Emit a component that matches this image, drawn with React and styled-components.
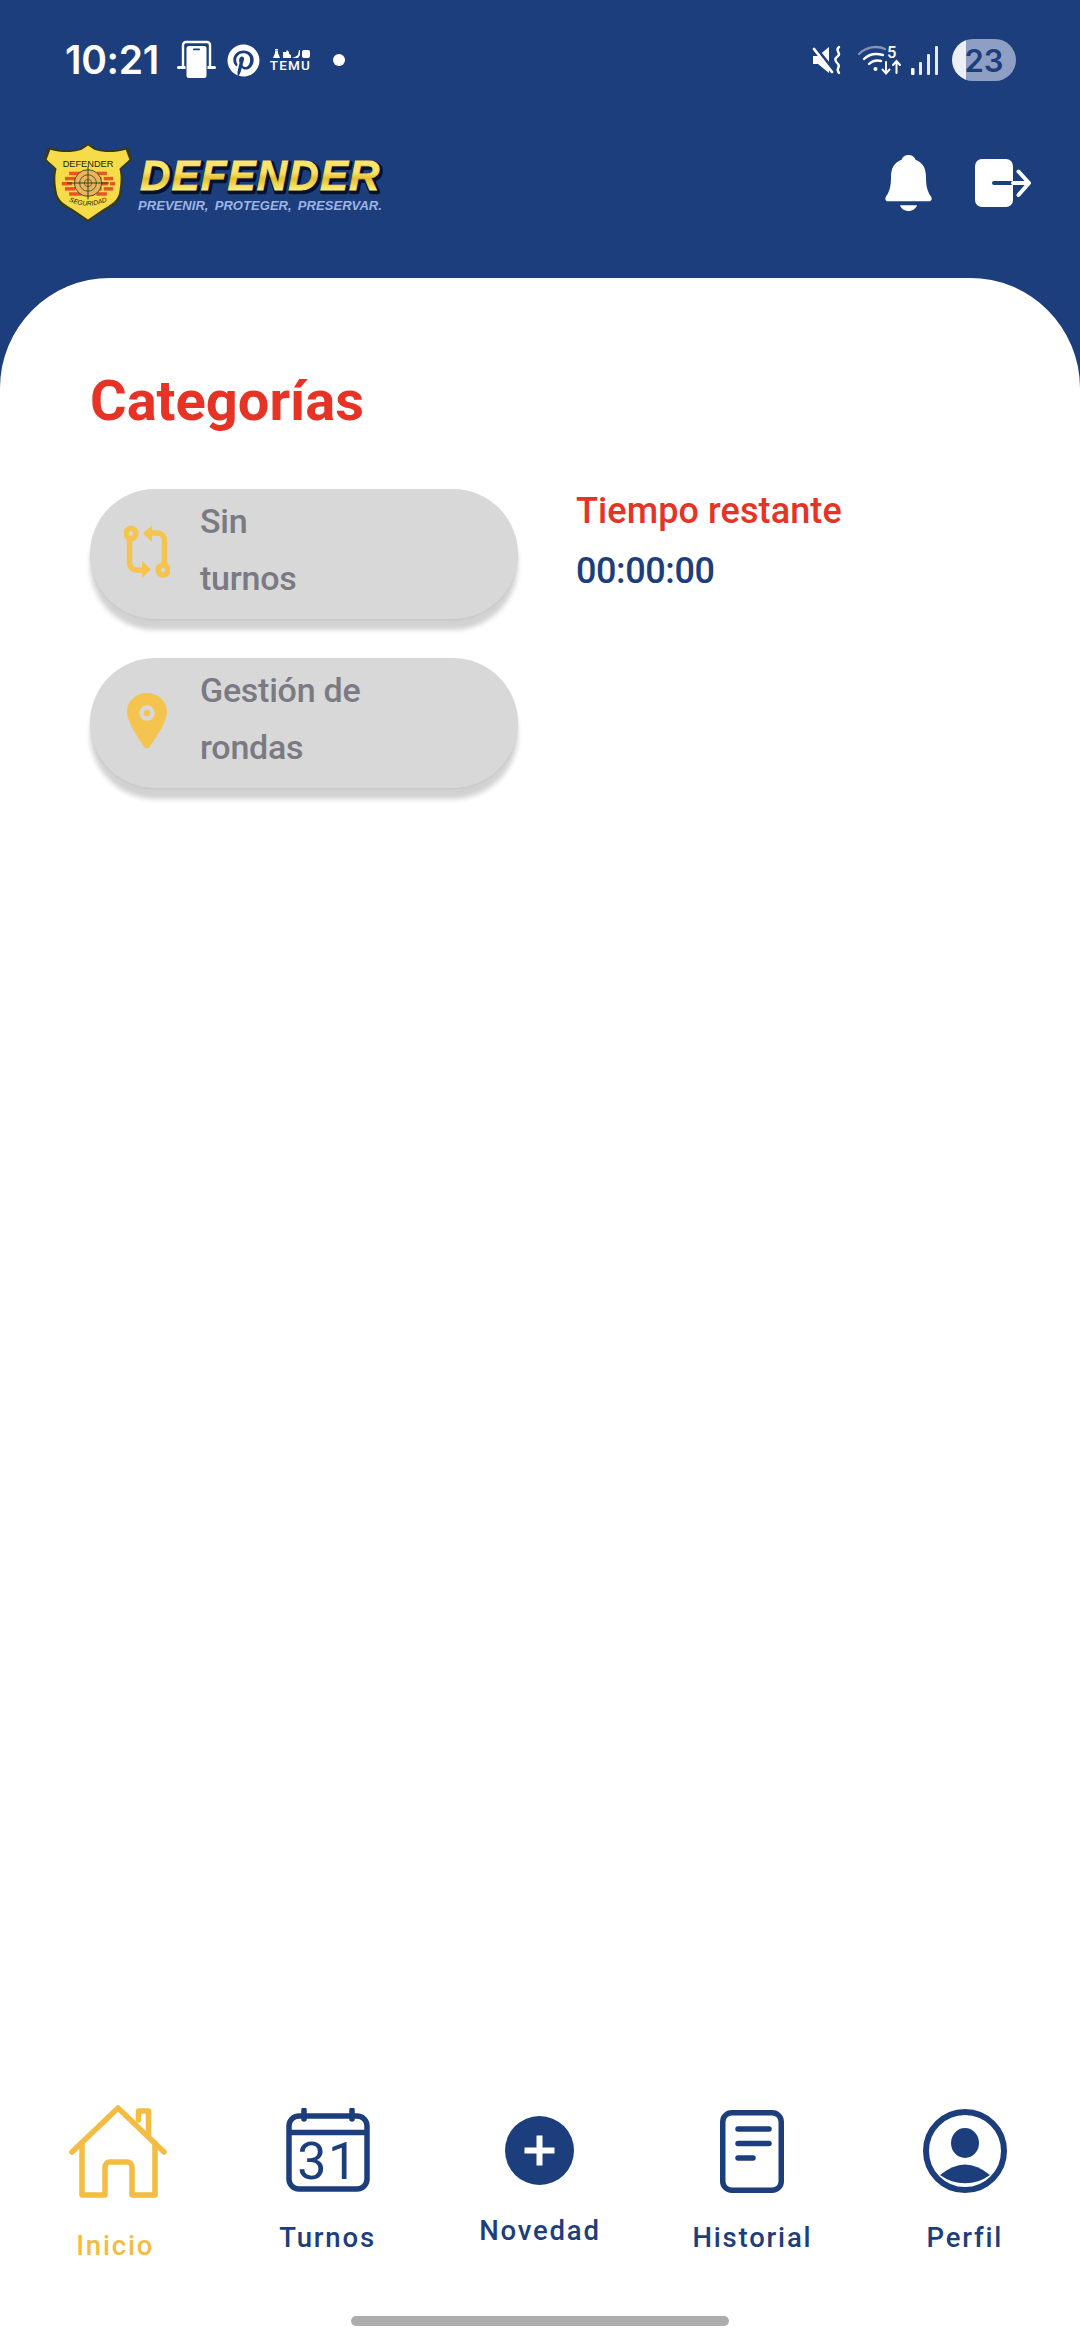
import React from "react";
import styled, { createGlobalStyle } from "styled-components";
import { FaPinterest } from "react-icons/fa";

const BLUE = "#1c3e7c";
const YELLOW = "#f2bd42";
const RED = "#e63326";

const Global = createGlobalStyle`
  html, body { margin: 0; padding: 0; background: #fff; }
  body { font-family: Roboto, "Noto Sans", sans-serif; }
  * { box-sizing: border-box; }
`;

const Screen = styled.div`
  width: 1080px;
  height: 2340px;
  background: ${BLUE};
  display: flex;
  flex-direction: column;
  overflow: hidden;
`;
const Header = styled.header`
  height: 278px;
  flex: none;
  color: #fff;
`;
const StatusBar = styled.div`
  height: 120px;
  padding: 0 64px 0 65px;
  display: flex;
  align-items: center;
  justify-content: space-between;
`;
const StatusGroup = styled.div`
  display: flex;
  align-items: center;
`;
const Clock = styled.span`
  font-family: Inter, Roboto, sans-serif;
  font-size: 39px;
  font-weight: 600;
  line-height: 44px;
  width: 93px;
  margin-right: 19px;
  white-space: nowrap;
  letter-spacing: -0.3px;
`;
const StatusIcon = styled.svg`
  display: block;
  flex: none;
  overflow: visible;
  margin-right: ${(p) => p.$mr || 0}px;
`;
const PinWrap = styled.span`
  display: flex;
  font-size: 33px;
  margin-right: 11px;
`;
const TemuBadge = styled.span`
  width: 39px;
  margin-right: 23px;
  display: flex;
  flex-direction: column;
  align-items: center;
`;
const TemuText = styled.span`
  font-family: Roboto, sans-serif;
  font-size: 13.5px;
  font-weight: 500;
  line-height: 11px;
  letter-spacing: 1.2px;
  white-space: nowrap;
`;
const Dot = styled.span`
  width: 12px;
  height: 12px;
  border-radius: 50%;
  background: #fff;
`;
const Battery = styled.div`
  width: 64px;
  height: 42px;
  border-radius: 21px;
  overflow: hidden;
  display: flex;
  align-items: center;
  justify-content: center;
  background: linear-gradient(90deg, #eceff6 14px, #8e9fc3 14px);
  color: ${BLUE};
  font-family: Inter, Roboto, sans-serif;
  font-size: 31px;
  font-weight: 600;
`;
const AppBar = styled.div`
  height: 126px;
  padding: 0 49px 0 44px;
  display: flex;
  align-items: center;
  justify-content: space-between;
`;
const Logo = styled.div`
  display: flex;
  align-items: center;
  gap: 5px;
`;
const Actions = styled.div`
  display: flex;
  align-items: center;
  gap: 43px;
`;
const Panel = styled.main`
  flex: 1;
  background: #fff;
  border-radius: 110px 110px 0 0;
  display: flex;
  flex-direction: column;
`;
const Content = styled.section`
  padding: 91px 0 0 90px;
`;
const Title = styled.h1`
  margin: 0 0 56px 0;
  font-size: 56px;
  font-weight: 700;
  line-height: 64px;
  color: ${RED};
`;
const Columns = styled.div`
  display: flex;
  align-items: flex-start;
  gap: 58px;
`;
const Pills = styled.div`
  width: 428px;
  display: flex;
  flex-direction: column;
  gap: 39px;
`;
const Pill = styled.div`
  height: 130px;
  border-radius: 65px;
  background: #d8d8d8;
  box-shadow: 0 11px 5px rgba(0, 0, 0, 0.18), 0 1px 2px rgba(0, 0, 0, 0.05);
  display: flex;
  align-items: center;
`;
const PillIcon = styled.div`
  width: 110px;
  flex: none;
  display: flex;
  justify-content: center;
  padding: 0 0 6px 3px;
`;
const PillLabel = styled.span`
  font-size: 34px;
  line-height: 57px;
  font-weight: 500;
  letter-spacing: -0.25px;
  color: #7a7a84;
  padding-bottom: 8px;
`;
const Timer = styled.div`
  padding-top: 0;
`;
const TimerLabel = styled.div`
  font-size: 36px;
  font-weight: 500;
  line-height: 44px;
  color: ${RED};
  letter-spacing: 0.1px;
`;
const TimerValue = styled.div`
  margin-top: 16px;
  font-size: 36px;
  font-weight: 500;
  line-height: 44px;
  color: ${BLUE};
  letter-spacing: -0.4px;
`;
const Nav = styled.nav`
  margin-top: auto;
  padding: 0 9px;
  display: grid;
  grid-template-columns: repeat(5, 1fr);
  height: 174px;
`;
const NavItem = styled.div`
  display: flex;
  flex-direction: column;
  align-items: center;
  padding-top: ${(p) => p.$top}px;
`;
const NavLabel = styled.span`
  margin-top: ${(p) => p.$gap}px;
  font-size: 27.5px;
  font-weight: 500;
  line-height: 32px;
  letter-spacing: 1.8px;
  color: ${(p) => (p.$active ? YELLOW : BLUE)};
  white-space: nowrap;
`;
const NavSvg = styled.svg`
  display: block;
  flex: none;
  margin-left: ${(p) => p.$ml || 0}px;
`;
const HomeBarRow = styled.div`
  height: 61px;
  flex: none;
  display: flex;
  justify-content: center;
  padding-top: 37px;
`;
const HomeBar = styled.div`
  width: 378px;
  height: 10px;
  border-radius: 5px;
  background: #adadad;
`;

const DeviceIcon = () => (
  <StatusIcon $mr={11} width="39" height="36" viewBox="0 0 39 36" fill="none">
    <path d="M6 25V3a3 3 0 0 1 3-3h21a3 3 0 0 1 3 3v22" stroke="#fff" strokeWidth="2.4" />
    <rect x="0" y="24" width="39" height="3" rx="1.5" fill="#fff" />
    <rect x="8.500" y="3" width="22" height="33" rx="3" fill={BLUE} />
    <rect x="9.500" y="4" width="20" height="32" rx="2.5" fill="#fff" />
    <rect x="16" y="6.500" width="7" height="1.800" rx="0.9" fill={BLUE} />
  </StatusIcon>
);

const MuteIcon = () => (
  <StatusIcon $mr={16} width="29" height="28" viewBox="0 0 29 28" fill="none">
    <path d="M0 10h5l11-9v26L5 18H0z" fill="#fff" />
    <path d="M1 1l20 25" stroke={BLUE} strokeWidth="5" />
    <path d="M1 3l18 23" stroke="#fff" strokeWidth="2.8" strokeLinecap="round" />
    <path d="M26 1c-5 4 3 6-1 9s-3 5 0 8-3 5 1 9" stroke="#fff" strokeWidth="2.4" strokeLinecap="round" />
  </StatusIcon>
);

const WifiIcon = () => (
  <StatusIcon $mr={9} width="44" height="30" viewBox="0 0 44 30" fill="none">
    <path d="M1 9c7-7 18-9 26-5" stroke="#fff" strokeOpacity="0.45" strokeWidth="2.4" strokeLinecap="round" />
    <path d="M6 14c5-5 12-6 19-4" stroke="#fff" strokeWidth="2.4" strokeLinecap="round" />
    <path d="M11 19c3-3 8-4 12-3" stroke="#fff" strokeWidth="2.4" strokeLinecap="round" />
    <circle cx="17.500" cy="24" r="2" fill="#fff" />
    <text x="29" y="13" fill="#fff" fontFamily="Roboto, sans-serif" fontSize="16.500" fontWeight="500">5</text>
    <path d="M28 17v11M24.500 24.500l3.500 4 3.500-4" stroke="#fff" strokeWidth="2" strokeLinecap="round" />
    <path d="M38.500 28V16M35 20l3.500-4 3.500 4" stroke="#fff" strokeWidth="2" strokeLinecap="round" />
  </StatusIcon>
);

const SignalIcon = () => (
  <StatusIcon $mr={14} width="27" height="29" viewBox="0 0 27 29">
    <rect x="0" y="22" width="3.500" height="7" rx="1" fill="#fff" />
    <rect x="8" y="16" width="3" height="13" rx="1" fill="#fff" opacity="0.9" />
    <rect x="16" y="8" width="3" height="21" rx="1" fill="#fff" opacity="0.9" />
    <rect x="24" y="0" width="3" height="29" rx="1" fill="#fff" opacity="0.9" />
  </StatusIcon>
);

const Shield = () => (
  <svg width="88" height="80" viewBox="0 0 84 78" preserveAspectRatio="none" style={{ display: "block", flex: "none" }}>
    <path d="M42 0l7 5c8 3 21 3 31-1l1 2 3 10c-4 4-8 7-10 9 2 8 1 16 0 23-1 10-8 14-16 18L42 77 26 66C18 62 11 58 10 48c-1-7-2-15 0-23-2-2-6-5-10-9l3-10 1-2c10 4 23 4 31 1z" fill="#3a3a14" />
    <path d="M42 2.500l6 4c9 3 20 3 30 0l3.500 9.500c-3 3.500-7 6-9.500 9 2 8 1 15 0 22-1 9-8 13-15 17L42 74.500 27 64C20 60 13 56 12 47c-1-7-2-14 0-22-2.500-3-6.500-5.500-9.500-9L6 6.500c10 3 21 3 30 0z" fill="#f6dc48" />
    <text x="42" y="23" textAnchor="middle" fontFamily="Liberation Sans, sans-serif" fontWeight="400" fontSize="8.800" fill="#1a2410">DEFENDER</text>
    <g fill="#e4552a">
      {[
        [24, 28, 12], [38, 28, 10], [50, 28, 10],
        [20, 33, 10], [32, 33, 9], [46, 33, 9], [57, 33, 9],
        [17, 38, 10], [29, 38, 9], [52, 38, 9], [63, 38, 5],
        [20, 43, 10], [32, 43, 9], [46, 43, 9], [57, 43, 9],
        [24, 48, 12], [38, 48, 10], [50, 48, 10],
      ].map(([x, y, w]) => (
        <rect key={`${x}-${y}`} x={x} y={y} width={w} height="3.400" />
      ))}
    </g>
    <circle cx="42" cy="39" r="13" fill="#eeb25a" stroke="#2a3a20" strokeWidth="0.8" />
    <circle cx="42" cy="39" r="8" fill="none" stroke="#2a5a30" strokeWidth="0.8" />
    <circle cx="42" cy="39" r="3.500" fill="none" stroke="#2a5a30" strokeWidth="0.7" />
    <path d="M42 23v32M22 39h40" stroke="#20401f" strokeWidth="0.9" />
    <path id="segArc" d="M22 56q20 10 40 0" fill="none" />
    <text fontFamily="Liberation Sans, sans-serif" fontWeight="400" fontStyle="italic" fontSize="6.400" fill="#1a2410">
      <textPath href="#segArc" startOffset="50%" textAnchor="middle">SEGURIDAD</textPath>
    </text>
  </svg>
);

const Wordmark = () => (
  <svg width="250" height="76" viewBox="0 0 250 76" style={{ display: "block", flex: "none" }}>
    <defs>
      <linearGradient id="gold" gradientUnits="userSpaceOnUse" x1="0" y1="15" x2="0" y2="45">
        <stop offset="0" stopColor="#fbe66e" />
        <stop offset="0.42" stopColor="#f9e266" />
        <stop offset="0.62" stopColor="#e6bf33" />
        <stop offset="1" stopColor="#fbec7c" />
      </linearGradient>
    </defs>
    <g fontFamily="Liberation Sans, sans-serif" fontWeight="700" fontStyle="italic" fontSize="42" letterSpacing="1.200">
      <text x="4.500" y="46.500" fill="#04122e" stroke="#04122e" strokeWidth="4.500" strokeLinejoin="round">DEFENDER</text>
      <text x="3" y="45" fill="url(#gold)" stroke="url(#gold)" strokeWidth="0.8">DEFENDER</text>
    </g>
    <text x="1" y="65" fontFamily="Liberation Sans, sans-serif" fontWeight="700" fontStyle="italic" fontSize="13" letterSpacing="0.050" wordSpacing="2.500" fill="#9db4e4">
      PREVENIR, PROTEGER, PRESERVAR.
    </text>
  </svg>
);

const BellIcon = () => (
  <svg width="47" height="56" viewBox="0 0 47 58" preserveAspectRatio="none" style={{ display: "block" }}>
    <path fill="#fff" d="M23.500 0c-3.500 0-6 2-7 5C9 8 6 14 6 23c0 8-1 14-5 20-1.500 2.500-.5 5 2 5h41c2.500 0 3.500-2.500 2-5-4-6-5-12-5-20 0-9-3-15-10.500-18-1-3-3.500-5-7-5z" />
    <path fill="#fff" d="M15 52h17c-1 3.500-4.500 6-8.500 6s-7.500-2.500-8.500-6z" />
  </svg>
);

const LogoutIcon = () => (
  <svg width="56" height="48" viewBox="0 0 56 48" style={{ display: "block" }}>
    <rect x="0" y="0" width="38" height="48" rx="7" fill="#fff" />
    <path d="M19 24h19" stroke={BLUE} strokeWidth="4" strokeLinecap="round" />
    <path d="M38 24h16M43.500 12.500L54 24 43.500 36" fill="none" stroke="#fff" strokeWidth="4" strokeLinecap="round" strokeLinejoin="round" />
  </svg>
);

const RouteIcon = () => (
  <svg width="46" height="53" viewBox="0 0 46 53" fill="none" style={{ display: "block" }}>
    <g stroke="#f4c44f" strokeWidth="5.500">
      <circle cx="7" cy="8.500" r="5" />
      <circle cx="39" cy="45" r="5" />
      <path d="M5.500 14v24a7 7 0 0 0 7 7H20" />
      <path d="M40.500 39V15a7 7 0 0 0-7-7H26" />
    </g>
    <path d="M28 0v17L19 8.500zM18 36v17l9-8.500z" fill="#f4c44f" />
  </svg>
);

const PinIcon = () => (
  <svg width="40" height="55" viewBox="0 0 40 55" style={{ display: "block" }}>
    <path fill="#f4c44f" d="M20 0C9 0 0 8 0 19c0 10 12 27 18 36h4c6-9 18-26 18-36C40 8 31 0 20 0z" />
    <circle cx="20" cy="20" r="5.500" fill="none" stroke="#d8d8d8" strokeWidth="4.500" />
  </svg>
);

const HomeIcon = () => (
  <NavSvg $ml={6} width="98" height="93" viewBox="0 0 98 93" fill="none" stroke={YELLOW} strokeWidth="5.500" strokeLinecap="round" strokeLinejoin="round">
    <path d="M3 47L49 3l46 44" />
    <path d="M13 38v52h23V62a5 5 0 0 1 5-5h17a5 5 0 0 1 5 5v28h23V38" />
    <path d="M69.500 15V6h10v25" />
  </NavSvg>
);

const CalendarIcon = () => (
  <NavSvg width="84" height="84" viewBox="0 0 84 84" fill="none" stroke={BLUE}>
    <rect x="3" y="8" width="78" height="73" rx="10" strokeWidth="5.500" />
    <path d="M3 24.500h78" strokeWidth="5.500" />
    <path d="M18 2v9M66 2v9" strokeWidth="5.500" strokeLinecap="round" />
    <text x="42" y="71" textAnchor="middle" fill={BLUE} stroke="none" fontFamily="Roboto, sans-serif" fontSize="52" fontWeight="400" letterSpacing="1.500">31</text>
  </NavSvg>
);

const PlusIcon = () => (
  <NavSvg width="69" height="69" viewBox="0 0 69 69">
    <circle cx="34.500" cy="34.500" r="34.500" fill={BLUE} />
    <path d="M34.500 19.500v30M19.500 34.500h30" stroke="#fff" strokeWidth="6" />
  </NavSvg>
);

const DocIcon = () => (
  <NavSvg width="64" height="83" viewBox="0 0 64 83" fill="none" stroke={BLUE} strokeWidth="5.500" strokeLinecap="round">
    <rect x="2.750" y="2.750" width="58.500" height="77.500" rx="9" />
    <path d="M18 19h31M18 33.500h31M18 48h15" />
  </NavSvg>
);

const ProfileIcon = () => (
  <NavSvg width="84" height="84" viewBox="0 0 84 84" fill="none">
    <circle cx="42" cy="42" r="39" stroke={BLUE} strokeWidth="6" />
    <ellipse cx="42" cy="34" rx="14" ry="15" fill={BLUE} />
    <path d="M17 66Q42 45 67 66A42 42 0 0 1 17 66Z" fill={BLUE} />
  </NavSvg>
);

export default function App() {
  return (
    <Screen>
      <Global />
      <Header>
        <StatusBar>
          <StatusGroup>
            <Clock>10:21</Clock>
            <DeviceIcon />
            <PinWrap><FaPinterest /></PinWrap>
            <TemuBadge>
              <svg width="39" height="10" viewBox="0 0 39 10" style={{ display: "block", marginBottom: 1 }}>
                <g fill="#fff">
                  <path d="M2 9l2-5V2h3v2l2 5zM4 0h3v1.500H4z" />
                  <path d="M12 3h3l1-2 2 2v2l2 1v3h-8z" />
                  <path d="M21 9l3-1 3-2 1-5h1v5l-2 3z" />
                  <rect x="31" y="1" width="8" height="8" rx="2" />
                </g>
              </svg>
              <TemuText>TEMU</TemuText>
            </TemuBadge>
            <Dot />
          </StatusGroup>
          <StatusGroup>
            <MuteIcon />
            <WifiIcon />
            <SignalIcon />
            <Battery>23</Battery>
          </StatusGroup>
        </StatusBar>
        <AppBar>
          <Logo>
            <Shield />
            <Wordmark />
          </Logo>
          <Actions>
            <BellIcon />
            <LogoutIcon />
          </Actions>
        </AppBar>
      </Header>
      <Panel>
        <Content>
          <Title>Categorías</Title>
          <Columns>
            <Pills>
              <Pill>
                <PillIcon><RouteIcon /></PillIcon>
                <PillLabel>Sin<br />turnos</PillLabel>
              </Pill>
              <Pill>
                <PillIcon><PinIcon /></PillIcon>
                <PillLabel>Gestión de<br />rondas</PillLabel>
              </Pill>
            </Pills>
            <Timer>
              <TimerLabel>Tiempo restante</TimerLabel>
              <TimerValue>00:00:00</TimerValue>
            </Timer>
          </Columns>
        </Content>
        <Nav>
          <NavItem $top={0}><HomeIcon /><NavLabel $active $gap={32}>Inicio</NavLabel></NavItem>
          <NavItem $top={3}><CalendarIcon /><NavLabel $gap={30}>Turnos</NavLabel></NavItem>
          <NavItem $top={11}><PlusIcon /><NavLabel $gap={30}>Novedad</NavLabel></NavItem>
          <NavItem $top={5}><DocIcon /><NavLabel $gap={29}>Historial</NavLabel></NavItem>
          <NavItem $top={4}><ProfileIcon /><NavLabel $gap={29}>Perfil</NavLabel></NavItem>
        </Nav>
        <HomeBarRow><HomeBar /></HomeBarRow>
      </Panel>
    </Screen>
  );
}
